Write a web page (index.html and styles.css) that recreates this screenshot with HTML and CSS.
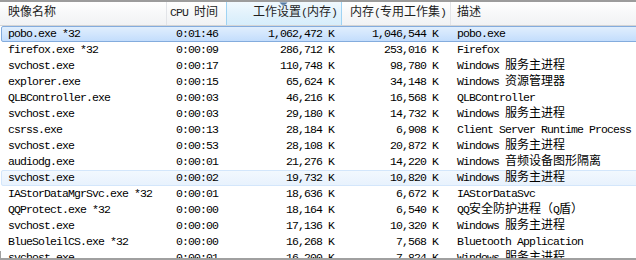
FILE: index.html
```html
<!DOCTYPE html>
<html>
<head>
<meta charset="utf-8">
<link rel="stylesheet" href="styles.css">
</head>
<body>
<div class="view">
  <div class="header">
    <div class="hc h1"><span class="z">映像名称</span></div>
    <div class="hc h2">CPU <span class="z">时间</span></div>
    <div class="hc h3 sorted"><svg class="arrow" width="9" height="5" viewBox="0 0 9 5"><defs><linearGradient id="ag" x1="0" y1="0" x2="0" y2="1"><stop offset="0" stop-color="#3e6590"/><stop offset="1" stop-color="#a9c3de"/></linearGradient></defs><path d="M0.5 0.5H8.5L4.5 4.5Z" fill="url(#ag)"/></svg><span class="z">工作设置</span>(<span class="z">内存</span>)</div>
    <div class="hc h4"><span class="z">内存</span>(<span class="z">专用工作集</span>)</div>
    <div class="hc h5"><span class="z">描述</span></div>
  </div>
  <div class="rows">
    <div class="row selected"><div class="c1">pobo.exe *32</div><div class="c2">0:01:46</div><div class="c3">1,062,472 K</div><div class="c4">1,046,544 K</div><div class="c5">pobo.exe</div></div>
    <div class="row"><div class="c1">firefox.exe *32</div><div class="c2">0:00:09</div><div class="c3">286,712 K</div><div class="c4">253,016 K</div><div class="c5">Firefox</div></div>
    <div class="row"><div class="c1">svchost.exe</div><div class="c2">0:00:17</div><div class="c3">110,748 K</div><div class="c4">98,780 K</div><div class="c5">Windows <span class="z">服务主进程</span></div></div>
    <div class="row"><div class="c1">explorer.exe</div><div class="c2">0:00:15</div><div class="c3">65,624 K</div><div class="c4">34,148 K</div><div class="c5">Windows <span class="z">资源管理器</span></div></div>
    <div class="row"><div class="c1">QLBController.exe</div><div class="c2">0:00:03</div><div class="c3">46,216 K</div><div class="c4">16,568 K</div><div class="c5">QLBController</div></div>
    <div class="row"><div class="c1">svchost.exe</div><div class="c2">0:00:03</div><div class="c3">29,180 K</div><div class="c4">14,732 K</div><div class="c5">Windows <span class="z">服务主进程</span></div></div>
    <div class="row"><div class="c1">csrss.exe</div><div class="c2">0:00:13</div><div class="c3">28,184 K</div><div class="c4">6,908 K</div><div class="c5">Client Server Runtime Process</div></div>
    <div class="row"><div class="c1">svchost.exe</div><div class="c2">0:00:53</div><div class="c3">28,108 K</div><div class="c4">20,872 K</div><div class="c5">Windows <span class="z">服务主进程</span></div></div>
    <div class="row"><div class="c1">audiodg.exe</div><div class="c2">0:00:01</div><div class="c3">21,276 K</div><div class="c4">14,220 K</div><div class="c5">Windows <span class="z">音频设备图形隔离</span></div></div>
    <div class="row hot"><div class="c1">svchost.exe</div><div class="c2">0:00:02</div><div class="c3">19,732 K</div><div class="c4">10,820 K</div><div class="c5">Windows <span class="z">服务主进程</span></div></div>
    <div class="row"><div class="c1">IAStorDataMgrSvc.exe *32</div><div class="c2">0:00:01</div><div class="c3">18,636 K</div><div class="c4">6,672 K</div><div class="c5">IAStorDataSvc</div></div>
    <div class="row"><div class="c1">QQProtect.exe *32</div><div class="c2">0:00:00</div><div class="c3">18,164 K</div><div class="c4">6,540 K</div><div class="c5">QQ<span class="z">安全防护进程（</span>Q<span class="z">盾）</span></div></div>
    <div class="row"><div class="c1">svchost.exe</div><div class="c2">0:00:00</div><div class="c3">17,136 K</div><div class="c4">10,320 K</div><div class="c5">Windows <span class="z">服务主进程</span></div></div>
    <div class="row"><div class="c1">BlueSoleilCS.exe *32</div><div class="c2">0:00:00</div><div class="c3">16,268 K</div><div class="c4">7,568 K</div><div class="c5">Bluetooth Application</div></div>
    <div class="row"><div class="c1">svchost.exe</div><div class="c2">0:00:01</div><div class="c3">16,200 K</div><div class="c4">7,824 K</div><div class="c5">Windows <span class="z">服务主进程</span></div></div>
  </div>
  <div class="frame"></div>
</div>
</body>
</html>
```
FILE: styles.css
```css
html, body {
  margin: 0;
  padding: 0;
  background: #fff;
  overflow: hidden;
}
.view {
  position: relative;
  width: 636px;
  height: 260px;
  overflow: hidden;
  font-family: "Liberation Mono", monospace;
  font-size: 11.5px;
  letter-spacing: -0.9px;
  color: #000;
}
.z {
  font-family: "Noto Sans CJK SC", sans-serif;
  font-size: 12px;
  letter-spacing: 0;
  line-height: 1px;
}
.header {
  display: grid;
  grid-template-columns: 167px 60px 115px 109px 1fr;
  height: 26px;
  box-sizing: border-box;
  border-top: 2px solid #9c9c9c;
  border-bottom: 1px solid #d5d5d5;
  background: linear-gradient(#ffffff, #f7f8f9 50%, #f1f2f4);
}
.hc {
  position: relative;
  box-sizing: border-box;
  border-right: 1px solid #e2e4e8;
  line-height: 22px;
  white-space: nowrap;
  color: #1e1e1e;
}
.h1 { padding-left: 8px; }
.h2 { text-align: right; padding-right: 8px; border-right-color: #9fd3f3; }
.h3 { text-align: right; padding-right: 4px; border-right-color: #9fd3f3; }
.h4 { padding-left: 8px; }
.h5 { padding-left: 6px; border-right: 0; }
.sorted {
  background: linear-gradient(#f1f9fe, #e2f2fc 50%, #d6edfb);
}
.arrow {
  position: absolute;
  left: 52px;
  top: 0;
}
.rows {
  display: flex;
  flex-direction: column;
}
.row {
  display: grid;
  grid-template-columns: 165px 60px 115px 109px 1fr;
  height: 16px;
  line-height: 14px;
  box-sizing: border-box;
  margin-left: 1px;
  margin-right: -4px;
  border: 1px solid transparent;
  white-space: nowrap;
}
.row > div { overflow: hidden; }
.c1 { padding-left: 6px; }
.c2 { text-align: right; padding-right: 9px; }
.c3 { text-align: right; padding-right: 8px; }
.c4 { text-align: right; padding-right: 13px; }
.c5 { padding-left: 6px; overflow: visible !important; }
.selected {
  border-color: #84acdd;
  border-radius: 2px;
  background: linear-gradient(#e0eefd, #d2e6fd 50%, #c3ddfc);
}
.hot {
  border-color: #d3e6fb;
  border-radius: 2px;
  background: linear-gradient(#f2f8fe, #e8f2fd);
}
.frame {
  position: absolute;
  left: 0;
  bottom: 0;
  width: 636px;
  height: 9px;
  box-sizing: border-box;
  border-left: 1px solid #a0a0a0;
  border-bottom: 2px solid #a0a0a0;
}
```
